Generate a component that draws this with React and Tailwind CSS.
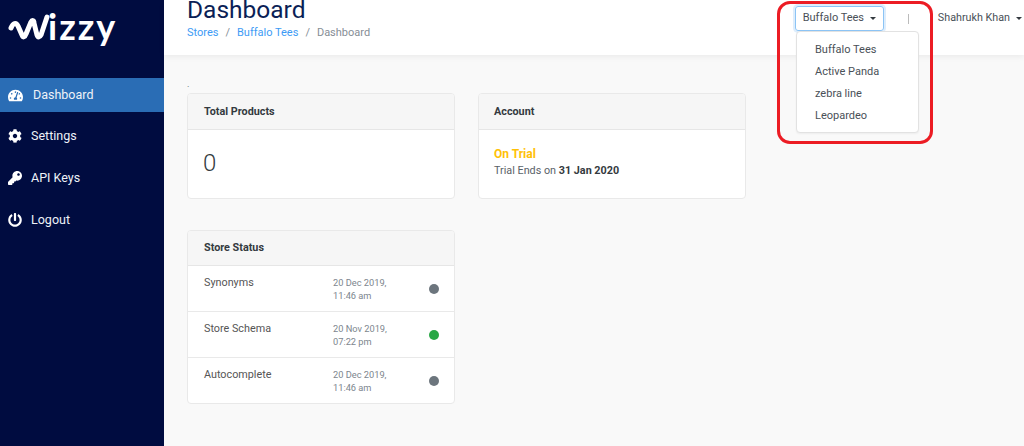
import { FaTachometerAlt, FaCog, FaKey, FaPowerOff } from "react-icons/fa";

const navItems = [
  { label: "Settings", icon: FaCog },
  { label: "API Keys", icon: FaKey },
  { label: "Logout", icon: FaPowerOff },
];

const stores = ["Buffalo Tees", "Active Panda", "zebra line", "Leopardeo"];

const statuses = [
  { name: "Synonyms", date: "20 Dec 2019,", time: "11:46 am", dot: "bg-[#6c757d]", row: "h-[46px] border-b border-[#e9e9e9]" },
  { name: "Store Schema", date: "20 Nov 2019,", time: "07:22 pm", dot: "bg-[#28a745]", row: "h-[46px] border-b border-[#e9e9e9]" },
  { name: "Autocomplete", date: "20 Dec 2019,", time: "11:46 am", dot: "bg-[#6c757d]", row: "h-[45px]" },
];

function Caret() {
  return <span className="ml-[6px] inline-block border-x-[3px] border-t-[3px] border-x-transparent border-t-[#343a40] align-middle" />;
}

function Card({ title, headClass, children }) {
  return (
    <div className="w-[268px] overflow-hidden rounded-[4px] border border-[#e9e9e9] bg-white">
      <div className={`flex items-center border-b border-[#e6e6e6] bg-[#f6f6f6] text-[10.8px] font-bold text-[#343a40] ${headClass}`}>
        {title}
      </div>
      {children}
    </div>
  );
}

export default function App() {
  return (
    <div className="relative flex h-[446px] w-[1024px] overflow-hidden bg-[#f9f9f9] font-['Roboto',sans-serif]">
      {/* Sidebar */}
      <aside className="w-[164px] shrink-0 bg-[#000c40] text-[#eef2f8]">
        <div className="flex h-[78px] items-start pl-[8px] pt-[8px]">
          <svg width="42" height="36" viewBox="0 0 42 36" className="mt-[2px] shrink-0">
            <path d="M3 18 C5 13 8 12 10 16 L14 25 C15 28 17 27 18 24 L23 12 C24 10 26 10 26 13 L29 25 C30 28 32 27 33 25 L39 7" fill="none" stroke="white" strokeWidth="5" strokeLinecap="round" strokeLinejoin="round" />
          </svg>
          <span className="-ml-[2px] font-['Lato',sans-serif] text-[36px] font-bold leading-[36px] tracking-[2px] text-white">izzy</span>
        </div>
        <a className="flex h-[34px] items-center gap-[10px] bg-[#2a6db5] pl-[8px] text-[12.5px]">
          <FaTachometerAlt className="text-[15px] text-white" />
          Dashboard
        </a>
        <nav className="mt-[3px] flex flex-col">
          {navItems.map((item) => (
            <a key={item.label} className="flex h-[42px] items-center gap-[9px] pl-[8px] text-[12.5px]">
              <item.icon className="text-[14px] text-white" />
              {item.label}
            </a>
          ))}
        </nav>
      </aside>

      <div className="flex min-w-0 flex-1 flex-col">
        {/* Header */}
        <header className="flex h-[55px] shrink-0 items-start justify-between bg-white pl-[23px] shadow-[0_2px_6px_rgba(0,0,0,0.06)]">
          <div>
            <h1 className="-mt-[5px] text-[24.5px] leading-[30px] font-normal text-[#0b1f56]">Dashboard</h1>
            <div className="mt-[1px] flex text-[11px] leading-[14px] text-[#868e96]">
              <span className="text-[#3d9bf5]">Stores</span>
              <span className="mx-[7px]">/</span>
              <span className="text-[#3d9bf5]">Buffalo Tees</span>
              <span className="mx-[7px]">/</span>
              <span>Dashboard</span>
            </div>
          </div>
          <div className="mr-[2px] mt-[6px] flex items-center text-[11px] text-[#495057]">
            <button className="flex h-[25px] w-[89px] items-center justify-center rounded-[3px] border border-[#8cc4f5] shadow-[0_0_0_2px_rgba(120,185,245,0.25)]">
              Buffalo Tees
              <Caret />
            </button>
            <span className="ml-[24px] mr-[29px] h-[10px] w-px bg-[#bbb]" />
            <span className="text-[10.75px]">Shahrukh Khan</span>
            <Caret />
          </div>
        </header>

        {/* Main */}
        <main className="flex-1 pl-[23px]">
          <div className="h-[38px] pt-[24px] text-[9px] leading-[10px] text-[#555]">.</div>
          <div className="flex items-start gap-[23px]">
            <Card title="Total Products" headClass="h-[36px] px-4 pt-[1px]">
              <div className="flex h-[68px] items-center pb-[2px] pl-[15px] text-[24px] font-light text-[#343a40]">0</div>
            </Card>
            <Card title="Account" headClass="h-[36px] pl-[15px] pt-[1px]">
              <div className="h-[68px] pl-[15px] pt-[17px]">
                <div className="text-[12px] leading-[15px] font-bold text-[#ffc107]">On Trial</div>
                <div className="mt-[1px] text-[10.8px] leading-[15px] text-[#5a6268]">
                  Trial Ends on <b className="font-bold text-[#343a40]">31 Jan 2020</b>
                </div>
              </div>
            </Card>
          </div>
          <div className="mt-[31px]">
            <Card title="Store Status" headClass="h-[35px] px-4">
              {statuses.map((row) => (
                <div key={row.name} className={`flex ${row.row}`}>
                  <div className="w-[145px] pl-4 pt-[10px] text-[10.8px] leading-[14px] text-[#555]">{row.name}</div>
                  <div className="w-[96px] pt-[10px] text-[9.25px] leading-[13px] text-[#7d868e]">
                    {row.date}
                    <br />
                    {row.time}
                  </div>
                  <div className="flex items-center">
                    <span className={`h-[10px] w-[10px] rounded-full ${row.dot}`} />
                  </div>
                </div>
              ))}
            </Card>
          </div>
        </main>
      </div>

      {/* Open store dropdown */}
      <div className="absolute left-[796px] top-[31px] h-[102px] w-[123px] rounded-[4px] border border-[#e2e2e2] bg-white py-[7px] pl-[18px] text-[11px] text-[#495057] shadow-[0_1px_2px_rgba(0,0,0,0.05)]">
        {stores.map((s) => (
          <div key={s} className="flex h-[22px] items-center">{s}</div>
        ))}
      </div>

      {/* Red annotation */}
      <div className="absolute left-[777px] top-[1px] h-[143px] w-[156px] rounded-[13px] border-[3px] border-[#ec1c24]" />
    </div>
  );
}
